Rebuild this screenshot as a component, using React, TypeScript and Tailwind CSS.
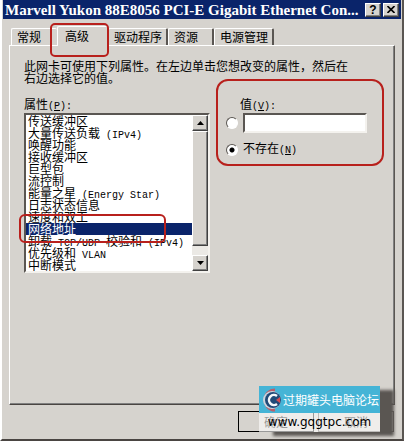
import { useState } from 'react';
import type { ReactNode } from 'react';

const tabs = ['常规', '高级', '驱动程序', '资源', '电源管理'];

// Each row is a list of [text, isLatin] runs.
const properties: [string, boolean][][] = [
  [['传送缓冲区', false]],
  [['大量传送负载', false], [' (IPv4)', true]],
  [['唤醒功能', false]],
  [['接收缓冲区', false]],
  [['巨型包', false]],
  [['流控制', false]],
  [['能量之星', false], [' (Energy Star)', true]],
  [['日志状态信息', false]],
  [['速度和双工', false]],
  [['网络地址', false]],
  [['卸载', false], [' TCP/UDP ', true], ['校验和', false], [' (IPv4)', true]],
  [['优先级和', false], [' VLAN', true]],
  [['中断模式', false]],
];

// Latin runs are half the width of the Chinese characters around them
function Latin({ children }: { children: ReactNode }) {
  return (
    <span className="whitespace-pre font-['Liberation_Mono',monospace] text-[10px]">{children}</span>
  );
}

function Hotkey({ letter, colon }: { letter: string; colon?: boolean }) {
  return (
    <Latin>
      (<span className="underline">{letter}</span>){colon ? ':' : ''}
    </Latin>
  );
}

const raised =
  'flex items-center justify-center border border-t-white border-l-white border-r-[#404040] border-b-[#404040] bg-[#d6d3ce] shadow-[inset_-1px_-1px_0_#808080]';

export default function App() {
  const [tab, setTab] = useState(1);
  const [selected, setSelected] = useState(9);
  const [mode, setMode] = useState('absent');

  return (
    <main className="relative flex min-h-screen flex-col border-r-2 border-b-2 border-l-2 border-r-[#5a5652] border-b-[#4a4542] border-l-white bg-[#d6d3ce] font-['Noto_Sans_CJK_SC',sans-serif] text-[12px] leading-[12px] text-black">
      {/* Title bar */}
      <header className="mr-px ml-px flex h-[19px] items-center gap-[2px] bg-[#0a246a] pr-[2px] pl-[2px]">
        <h1 className="flex-1 font-['Liberation_Serif',serif] text-[15px] leading-[18px] font-bold whitespace-nowrap text-white">
          Marvell Yukon 88E8056 PCI-E Gigabit Ethernet Con...
        </h1>
        <button aria-label="帮助" className={`${raised} h-[14px] w-4 font-['Liberation_Sans',sans-serif] font-bold`}>
          ?
        </button>
        <button aria-label="关闭" className={`${raised} h-[14px] w-4`}>
          <svg width="8" height="7" viewBox="0 0 8 7" stroke="#000" strokeWidth="1.6">
            <path d="M0.5 0 L7.5 7 M7.5 0 L0.5 7" />
          </svg>
        </button>
      </header>

      {/* Tabs */}
      <div role="tablist" className="mt-[7px] ml-[9px] flex h-[19px] items-end">
        {tabs.map((name, i) => (
          <button
            key={name}
            role="tab"
            aria-selected={tab === i}
            onClick={() => setTab(i)}
            className={`rounded-t-[2px] border-t border-l border-t-white border-l-white bg-[#d6d3ce] pl-[5px] text-left whitespace-nowrap ${
              tab === i
                ? 'relative z-10 -mb-px h-[20px] w-[51px] pb-[2px] pl-[7px]'
                : i === 0
                  ? 'h-[17px] w-[46px]'
                  : 'h-[17px] min-w-[46px] border-r-2 border-r-[#5a5652] pr-[4px]'
            }`}
          >
            {name}
          </button>
        ))}
      </div>

      {/* Tab page */}
      <section className="mr-[7px] ml-[7px] flex-1 border border-t-white border-r-[#5a5652] border-b-[#4a4542] border-l-white px-[14px] pt-[14px] shadow-[inset_-1px_-1px_0_#808080]">
        <p>
          此网卡可使用下列属性。在左边单击您想改变的属性，然后在
          <br />
          右边选择它的值。
        </p>
        <div className="mt-[14px] flex">
          <div className="w-[186px]">
            <div id="prop-label" className="h-[15px]">
              属性
              <Hotkey letter="P" colon />
            </div>
            <div className="flex border-2 border-t-[#5a5652] border-r-[#f4f2ee] border-b-[#f4f2ee] border-l-[#5a5652] bg-white">
              <ul role="listbox" aria-labelledby="prop-label" className="flex-1">
                {properties.map((runs, i) => (
                  <li
                    key={i}
                    role="option"
                    aria-selected={selected === i}
                    onClick={() => setSelected(i)}
                    className={`h-[12px] pl-[2px] whitespace-nowrap ${selected === i ? 'bg-[#0a246a] text-white' : ''}`}
                  >
                    {runs.map(([text, latin]) => (latin ? <Latin key={text}>{text}</Latin> : text))}
                  </li>
                ))}
              </ul>
              <div className="flex w-4 flex-col bg-[#ebe9e5]">
                <button aria-label="向上" className={`${raised} h-4`}>
                  <svg width="7" height="4" viewBox="0 0 7 4">
                    <path d="M3.5 0 L7 4 H0 Z" />
                  </svg>
                </button>
                <div className={`${raised} h-[115px]`} />
                <button aria-label="向下" className={`${raised} mt-auto h-4`}>
                  <svg width="7" height="4" viewBox="0 0 7 4">
                    <path d="M0 0 H7 L3.5 4 Z" />
                  </svg>
                </button>
              </div>
            </div>
          </div>
          <div className="ml-[16px] w-[142px]">
            <label htmlFor="value" className="ml-[14px] block h-[15px]">
              值
              <Hotkey letter="V" colon />
            </label>
            <div className="flex items-center gap-[5px]">
              <Radio label="值" checked={mode === 'value'} onChange={() => setMode('value')} />
              <input
                id="value"
                className="h-5 w-[124px] border-2 border-t-[#5a5652] border-r-[#f4f2ee] border-b-[#f4f2ee] border-l-[#5a5652] bg-white"
              />
            </div>
            <label className="mt-[9px] flex items-center gap-[5px]">
              <Radio checked={mode === 'absent'} onChange={() => setMode('absent')} />
              <span>
                不存在
                <Hotkey letter="N" />
              </span>
            </label>
          </div>
        </div>
      </section>

      {/* Dialog buttons */}
      <footer className="mr-[8px] flex h-[34px] items-start justify-end gap-[4px] pt-[6px]">
        <button className="h-[21px] w-[76px] border border-black">确定</button>
        <button className="h-[21px] w-[76px] border border-[#5a5652]">取消</button>
      </footer>

      {/* Red callouts */}
      <div className="pointer-events-none absolute top-[23px] left-[48px] z-20 h-[34px] w-[59px] rounded-[5px] border-2 border-[#b8201c]" />
      <div className="pointer-events-none absolute top-[79px] left-[214px] z-20 h-[87px] w-[168px] rounded-[12px] border-2 border-[#b8201c]" />
      <div className="pointer-events-none absolute top-[214px] left-[17px] z-20 h-[29px] w-[147px] rounded-[6px] border-2 border-[#b8201c]" />

      {/* Forum badge, the buttons show faintly through its lower half */}
      <div className="absolute right-[22px] bottom-[7px] z-20 w-[121px] shadow-[14px_4px_3px_#5a5652]">
        <div className="flex h-[27px] items-center bg-[#45b4d6] text-white">
          <Logo />
          <span>过期罐头电脑论坛</span>
        </div>
        <div className="h-[19px] bg-white/60 text-center font-['DejaVu_Sans',sans-serif] text-[12px] leading-[18px]">
          www.gqgtpc.com
        </div>
      </div>
    </main>
  );
}

function Radio({ label, checked, onChange }: { label?: string; checked: boolean; onChange: () => void }) {
  return (
    <input
      type="radio"
      name="mode"
      aria-label={label}
      checked={checked}
      onChange={onChange}
      className="size-3 shrink-0 appearance-none rounded-full border border-t-[#5a5652] border-r-white border-b-white border-l-[#5a5652] bg-white checked:bg-[radial-gradient(circle,#000_2px,#fff_3px)]"
    />
  );
}

function Logo() {
  return (
    <svg width="24" height="24" viewBox="0 0 24 24" fill="none">
      <path d="M16 2 A10 10 0 1 0 16 22" stroke="#b8606c" strokeWidth="3" />
      <circle cx="13" cy="12" r="9" fill="#c9d6e0" />
      <circle cx="14" cy="12" r="8" fill="#204a78" />
      <path d="M18 8 A5 5 0 1 0 18 16" stroke="#f4f7fa" strokeWidth="2.5" />
      <path d="M17 12 L21 9 V15 Z" fill="#d84a50" />
    </svg>
  );
}
